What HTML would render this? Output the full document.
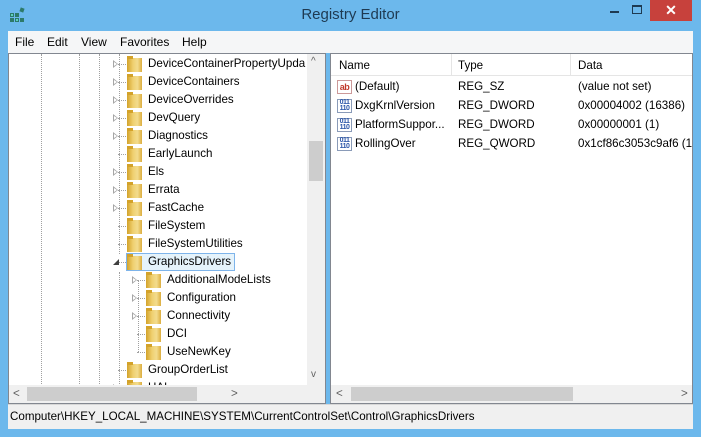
<!DOCTYPE html>
<html><head><meta charset="utf-8"><style>
*{margin:0;padding:0;box-sizing:border-box}
body{width:701px;height:437px;overflow:hidden;background:#6cb8ec;font-family:"Liberation Sans",sans-serif;font-size:11.6px;color:#000;position:relative}
.abs{position:absolute}
.title{left:0;top:6px;width:701px;text-align:center;font-size:15px;color:#1e3a52}
.menu{left:8px;top:31px;width:685px;height:22px;background:#f5f6f7;font-size:12px}
.menu span{position:absolute;top:4px}
.tree{left:8px;top:53px;width:318px;height:351px;background:#fff;border:1px solid #828790;overflow:hidden}
.list{left:330px;top:53px;width:363px;height:351px;background:#fff;border:1px solid #828790;overflow:hidden}
.row{position:absolute;height:18px;line-height:18px;white-space:nowrap}
.fold{position:absolute;width:15px;height:14px;background:linear-gradient(90deg,#d3a22a,#efd070 40%,#f3dc8e 70%,#dcae40)}
.fold:before{content:"";position:absolute;left:0;top:-2px;width:6px;height:3px;background:#d3a22a}
.tri{position:absolute;width:0;height:0;border-left:5px solid #a6a6a6;border-top:4px solid transparent;border-bottom:4px solid transparent}
.tri:after{content:"";position:absolute;left:-4px;top:-2px;border-left:3px solid #fff;border-top:2px solid transparent;border-bottom:2px solid transparent}
.vd{position:absolute;width:1px;border-left:1px dotted #a0a0a0}
.hd{position:absolute;height:1px;border-top:1px dotted #a0a0a0}
.sb{background:#f0f0f0}
.status{left:8px;top:404px;width:685px;height:25px;background:#f0f0f0;border-top:1px solid #d7d7d7}
.ico{position:absolute;width:15px;height:14px;border:1px solid #8a9bb8;background:#fff;font-size:7px;line-height:6px;color:#2a55a8;font-weight:bold;text-align:center;letter-spacing:-0.5px}
</style></head><body>
<svg class="abs" style="left:9px;top:7px" width="17" height="17" viewBox="0 0 17 17"><g fill="#2d7a6a"><rect x="1" y="6" width="4" height="4"/><rect x="6" y="6" width="4" height="4"/><rect x="1" y="11" width="4" height="4"/><rect x="6" y="11" width="4" height="4"/><rect x="11" y="11" width="4" height="4"/><rect x="11" y="1" width="4" height="4" transform="rotate(20 13 3)"/></g><g fill="#5fd0c0"><rect x="2" y="7" width="2" height="2"/><rect x="7" y="12" width="2" height="2"/></g></svg>
<div class="abs title">Registry Editor</div>
<div class="abs" style="left:610px;top:11px;width:9px;height:2px;background:#1e3a52"></div>
<div class="abs" style="left:632px;top:5px;width:10px;height:9px;border:1px solid #1e3a52;border-top-width:2px"></div>
<div class="abs" style="left:650px;top:0;width:42px;height:21px;background:#c7413c;color:#fff;text-align:center;font-size:14px;line-height:20px;font-weight:bold">✕</div>
<div class="abs menu"><span style="left:7px">File</span><span style="left:39px">Edit</span><span style="left:73px">View</span><span style="left:112px">Favorites</span><span style="left:174px">Help</span></div>

<div class="abs tree">
<div class="vd" style="left:32px;top:0;height:330px"></div>
<div class="vd" style="left:70px;top:0;height:330px"></div>
<div class="vd" style="left:90px;top:0;height:330px"></div>
<div class="vd" style="left:110px;top:0;height:200px"></div>
<div class="vd" style="left:110px;top:218px;height:120px"></div>
<div class="vd" style="left:129px;top:226px;height:72px"></div>
<div id="rows"></div>
<div class="abs sb" style="left:298px;top:0;width:18px;height:331px"></div>
<div class="abs" style="left:300px;top:87px;width:14px;height:40px;background:#cdcdcd"></div>
<div class="abs" style="left:302px;top:2px;color:#606060;font-size:10px">^</div>
<div class="abs" style="left:302px;top:315px;color:#606060;font-size:10px">v</div>
<div class="abs sb" style="left:0;top:331px;width:316px;height:18px"></div>
<div class="abs" style="left:18px;top:333px;width:170px;height:14px;background:#cdcdcd"></div>
<div class="abs" style="left:4px;top:333px;color:#606060">&lt;</div>
<div class="abs" style="left:222px;top:333px;color:#606060">&gt;</div>
</div>

<div class="abs list">
<div class="row" style="left:0;top:0;width:361px;height:22px;line-height:22px;border-bottom:1px solid #e5e5e5"></div>
<div class="abs" style="left:120px;top:0;width:1px;height:22px;background:#e5e5e5"></div>
<div class="abs" style="left:239px;top:0;width:1px;height:22px;background:#e5e5e5"></div>
<div class="row" style="left:8px;top:3px">Name</div>
<div class="row" style="left:127px;top:3px">Type</div>
<div class="row" style="left:247px;top:3px">Data</div>
<div class="ico" style="left:6px;top:26px;color:#c0392b;font-size:9px;line-height:12px;border-color:#c99">ab</div>
<div class="row" style="left:24px;top:24px">(Default)</div><div class="row" style="left:127px;top:24px">REG_SZ</div><div class="row" style="left:247px;top:24px">(value not set)</div>
<div class="ico" style="left:6px;top:45px">011<br>110</div>
<div class="row" style="left:24px;top:43px">DxgKrnlVersion</div><div class="row" style="left:127px;top:43px">REG_DWORD</div><div class="row" style="left:247px;top:43px">0x00004002 (16386)</div>
<div class="ico" style="left:6px;top:64px">011<br>110</div>
<div class="row" style="left:24px;top:62px">PlatformSuppor...</div><div class="row" style="left:127px;top:62px">REG_DWORD</div><div class="row" style="left:247px;top:62px">0x00000001 (1)</div>
<div class="ico" style="left:6px;top:83px">011<br>110</div>
<div class="row" style="left:24px;top:81px">RollingOver</div><div class="row" style="left:127px;top:81px">REG_QWORD</div><div class="row" style="left:247px;top:81px;width:114px;overflow:hidden">0x1cf86c3053c9af6 (13</div>
<div class="abs sb" style="left:0;top:331px;width:361px;height:18px"></div>
<div class="abs" style="left:20px;top:333px;width:222px;height:14px;background:#cdcdcd"></div>
<div class="abs" style="left:5px;top:333px;color:#606060">&lt;</div>
<div class="abs" style="left:350px;top:333px;color:#606060">&gt;</div>
</div>

<div class="abs status"><span style="position:absolute;left:2px;top:5px">Computer\HKEY_LOCAL_MACHINE\SYSTEM\CurrentControlSet\Control\GraphicsDrivers</span></div>

<script>
var items=[["DeviceContainerPropertyUpda",1,1],["DeviceContainers",1,1],["DeviceOverrides",1,1],["DevQuery",1,1],["Diagnostics",1,1],["EarlyLaunch",1,0],["Els",1,1],["Errata",1,1],["FastCache",1,1],["FileSystem",1,0],["FileSystemUtilities",1,0],["GraphicsDrivers",1,2],["AdditionalModeLists",2,1],["Configuration",2,1],["Connectivity",2,1],["DCI",2,0],["UseNewKey",2,0],["GroupOrderList",1,0],["HAL",1,1]];
var h="";
items.forEach(function(it,i){
 var y=i*18+1, fx=it[1]==1?118:137, tx=it[1]==1?139:158;
 h+='<div class="hd" style="left:'+(fx-9)+'px;top:'+(y+9)+'px;width:8px"></div>';
 if(it[2]==1)h+='<div class="tri" style="left:'+(fx-14)+'px;top:'+(y+5)+'px"></div>';
 if(it[2]==2)h+='<div class="abs" style="left:'+(fx-14)+'px;top:'+(y+6)+'px;width:0;height:0;border-left:6px solid transparent;border-bottom:6px solid #404040"></div>';
 if(it[2]==2)h+='<div class="abs" style="left:'+(fx-1)+'px;top:'+(y)+'px;width:109px;height:18px;border:1px solid #7eb4ea;background:#e5f3fb"></div>';
 h+='<div class="fold" style="left:'+fx+'px;top:'+(y+3)+'px"></div>';
 h+='<div class="row" style="left:'+tx+'px;top:'+y+'px">'+it[0]+'</div>';
});
document.getElementById("rows").innerHTML=h;
</script>
</body></html>
